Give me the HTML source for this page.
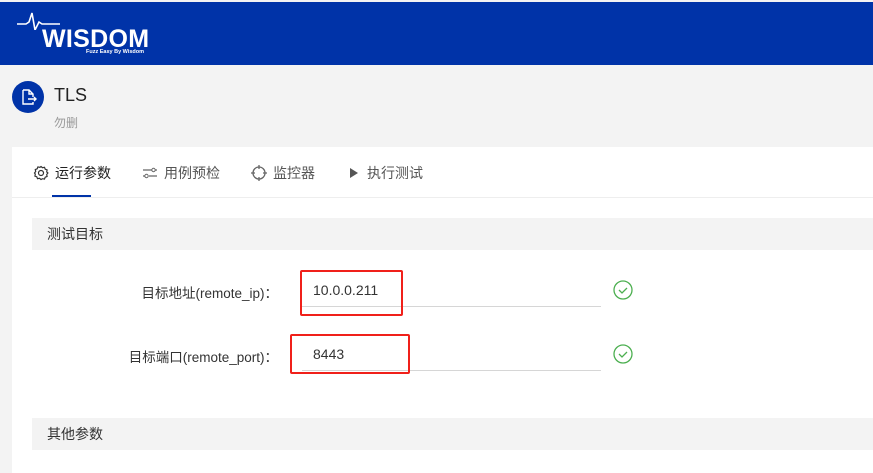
<!DOCTYPE html>
<html><head><meta charset="utf-8"><style>
*{margin:0;padding:0;box-sizing:border-box}
body{width:873px;height:473px;overflow:hidden;background:#f3f3f3;font-family:"Liberation Sans","Noto Sans CJK SC",sans-serif;position:relative}
.abs{position:absolute}
.hdr{left:0;top:2px;width:873px;height:63px;background:#0033a8}
.card{left:12px;top:147px;width:861px;height:326px;background:#fff}
.tab{top:163px;font-size:14px;color:#555;display:flex;align-items:center;gap:6px}
.sec{left:32px;width:841px;height:32px;background:#f3f3f3;font-size:14px;color:#333;padding-left:15px;line-height:32px}
.lbl{font-size:13.5px;color:#333;text-align:right;width:270px;left:8px}
.line{height:1px;background:#d6d6d6;left:302px;width:299px}
.red{border:2px solid #f0201a;border-radius:2px}
.val{font-size:14px;color:#333}
</style></head><body>
<div class="abs hdr"></div>
<svg class="abs" style="left:16px;top:10px" width="60" height="20"><polyline points="1,14 10,14 13,12 16,3 19,20 23,12 26,14 44,14" fill="none" stroke="#fff" stroke-width="1.6"/></svg>
<div class="abs" style="left:42px;top:25px;color:#fff;font-weight:bold;font-size:25px;letter-spacing:0.3px">WISDOM</div>
<div class="abs" style="left:86px;top:49px;color:#fff;font-size:5.5px;font-weight:bold">Fuzz Easy By Wisdom</div>
<div class="abs" style="left:12px;top:81px;width:32px;height:32px;border-radius:50%;background:#0033a8"></div>
<svg class="abs" style="left:20px;top:88px" width="18" height="18"><path d="M3 2h6l4 4v3M13 14v2H3V2M9 2v4h4M8 11h8M14 9l2 2-2 2" fill="none" stroke="#fff" stroke-width="1.4"/></svg>
<div class="abs" style="left:54px;top:85px;font-size:18px;color:#222">TLS</div>
<div class="abs" style="left:54px;top:114px;font-size:12px;color:#999">勿删</div>
<div class="abs card"></div>
<div class="abs" style="left:12px;top:197px;width:861px;height:1px;background:#eee"></div>
<div class="abs" style="left:52px;top:195px;width:39px;height:2px;background:#0033a8"></div>
<div class="abs tab" style="left:33px;color:#222">
<svg width="16" height="16" viewBox="0 0 16 16"><circle cx="8" cy="8" r="2.5" fill="none" stroke="#333" stroke-width="1.2"/><path d="M8 1.5l1.5 1.2 2-.4.7 1.9 1.9.7-.4 2 1.2 1.1-1.2 1.5.4 2-1.9.7-.7 1.9-2-.4L8 14.5l-1.5-1.2-2 .4-.7-1.9-1.9-.7.4-2L1.5 8l1.2-1.5-.4-2 1.9-.7.7-1.9 2 .4z" fill="none" stroke="#333" stroke-width="1.2"/></svg>运行参数</div>
<div class="abs tab" style="left:142px">
<svg width="16" height="16"><path d="M1 5h9M13 5h2M1 11h2M7 11h8" stroke="#666" stroke-width="1.2"/><circle cx="11.5" cy="5" r="1.7" fill="none" stroke="#666"/><circle cx="4.5" cy="11" r="1.7" fill="none" stroke="#666"/></svg>用例预检</div>
<div class="abs tab" style="left:251px">
<svg width="16" height="16"><circle cx="8" cy="8" r="6" fill="none" stroke="#666" stroke-width="1.3"/><path d="M8 0v4M8 12v4M0 8h4M12 8h4" stroke="#666" stroke-width="1.3"/></svg>监控器</div>
<div class="abs tab" style="left:347px">
<svg width="14" height="16"><path d="M3 3l8 5-8 5z" fill="#555"/></svg>执行测试</div>
<div class="abs sec" style="top:218px">测试目标</div>
<div class="abs lbl" style="top:282px">目标地址(remote_ip)：</div>
<div class="abs line" style="top:306px"></div>
<div class="abs val" style="left:313px;top:282px">10.0.0.211</div>
<div class="abs red" style="left:300px;top:270px;width:103px;height:46px"></div>
<svg class="abs" style="left:613px;top:280px" width="20" height="20"><circle cx="10" cy="10" r="9" fill="none" stroke="#4caf50" stroke-width="1.3"/><path d="M6 10l3 3 5-5" fill="none" stroke="#4caf50" stroke-width="1.3"/></svg>
<div class="abs lbl" style="top:346px">目标端口(remote_port)：</div>
<div class="abs line" style="top:370px"></div>
<div class="abs val" style="left:313px;top:346px">8443</div>
<div class="abs red" style="left:290px;top:334px;width:120px;height:40px"></div>
<svg class="abs" style="left:613px;top:344px" width="20" height="20"><circle cx="10" cy="10" r="9" fill="none" stroke="#4caf50" stroke-width="1.3"/><path d="M6 10l3 3 5-5" fill="none" stroke="#4caf50" stroke-width="1.3"/></svg>
<div class="abs sec" style="top:418px">其他参数</div>
</body></html>
